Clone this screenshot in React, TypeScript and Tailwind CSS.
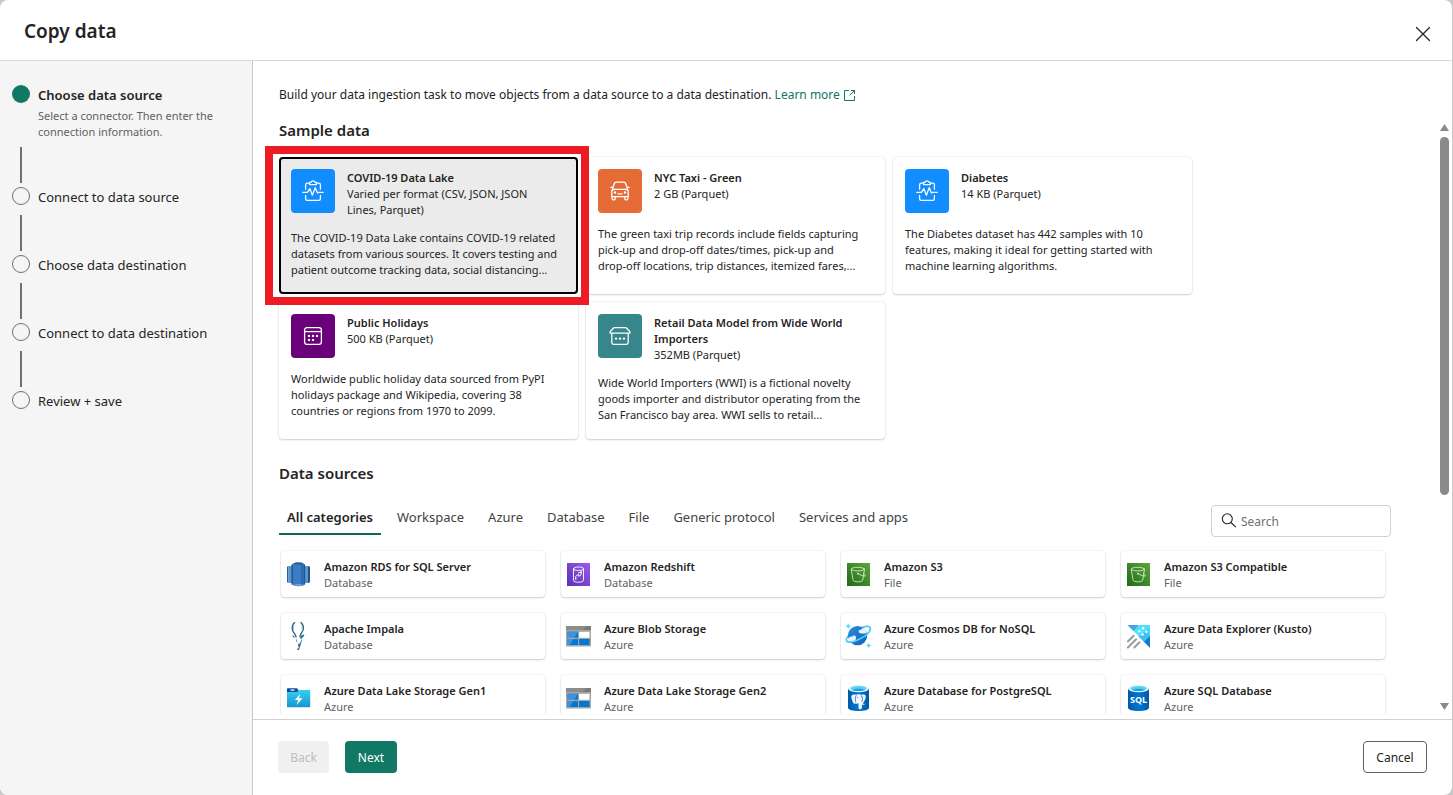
import React from 'react';

type IconProps = { className?: string };

function HealthIcon() {
  return (
    <svg width="22" height="22" viewBox="0 0 22 22" fill="none" stroke="#fff" strokeWidth="1.3" strokeLinejoin="round" strokeLinecap="round">
      <path d="M7.5 3.2H5.2a1.6 1.6 0 0 0-1.6 1.6v4.4M14.5 3.2h2.3a1.6 1.6 0 0 1 1.6 1.6v4.4M3.6 15.4v3.4a1.6 1.6 0 0 0 1.6 1.6h11.6a1.6 1.6 0 0 0 1.6-1.6v-3.4" />
      <path d="M7.6 4.6V2.9c0-.5.4-.8.9-.8h.7c.2-.8.9-1.3 1.8-1.3s1.6.5 1.8 1.3h.7c.5 0 .9.3.9.8v1.7z" />
      <path d="M.8 12.4h4.600l2.400-3.800 2.600 6.600 2.800-7.600 2.200 5.400 1-.6h4.800" />
    </svg>
  );
}

function TaxiIcon() {
  return (
    <svg width="20" height="20" viewBox="0 0 20 20" fill="none" stroke="#fff" strokeWidth="1.3" strokeLinejoin="round" strokeLinecap="round">
      <path d="M2.4 8.6 4 3.2C4.4 1.8 5.200 1.200 6.500 1.200h7c1.300 0 2.100.6 2.500 2l1.600 5.400" />
      <path d="M1.8 15.600v-4.800c0-1.400.8-2.400 2.200-2.400h12c1.400 0 2.200 1 2.200 2.400v4.800zM.8 6.400h2M17.200 6.400h2" />
      <path d="M2.200 15.800v2c0 .6.4 1 1 1h1c.6 0 1-.4 1-1v-2M14.800 15.800v2c0 .6.4 1 1 1h1c.6 0 1-.4 1-1v-2" />
      <path d="M8 12.900h4" />
      <circle cx="5" cy="11.500" r=".6" fill="#fff" stroke="#fff" />
      <circle cx="15" cy="11.500" r=".6" fill="#fff" stroke="#fff" />
    </svg>
  );
}

function HolidayIcon() {
  return (
    <svg width="20" height="20" viewBox="0 0 20 20" fill="none" stroke="#fff" strokeWidth="1.3">
      <rect x="1.600" y="1.600" width="16.800" height="16.800" rx="2.400" />
      <path d="M1.600 5.600h16.800" />
      <g fill="#fff" stroke="none">
        <circle cx="6" cy="9.900" r="1.200" />
        <circle cx="10" cy="9.900" r="1.200" />
        <circle cx="14" cy="9.900" r="1.200" />
        <circle cx="6" cy="13.900" r="1.200" />
        <circle cx="10" cy="13.900" r="1.200" />
      </g>
    </svg>
  );
}

function StoreIcon() {
  return (
    <svg width="22" height="20" viewBox="0 0 22 20" fill="none" stroke="#fff" strokeWidth="1.3" strokeLinejoin="round">
      <path d="M5.600 1.600h10.800c.6 0 1 .2 1.400.6l3 3.400c.6.700.2 1.600-.7 1.600H1.900c-.9 0-1.300-.9-.7-1.600l3-3.400c.4-.4.800-.6 1.400-.6z" />
      <path d="M2.800 7.200v9.400c0 1.100.7 1.800 1.800 1.800h12.800c1.100 0 1.800-.7 1.800-1.800V7.200" />
      <g fill="#fff" stroke="none">
        <circle cx="7" cy="12.600" r="1.200" />
        <circle cx="11" cy="12.600" r="1.200" />
        <circle cx="15" cy="12.600" r="1.200" />
      </g>
    </svg>
  );
}

function RdsIcon() {
  return (
    <svg width="26" height="26" viewBox="0.5 -0.5 26 26">
      <path d="M1.500 5.200 3 4.500v17l-1.500-.7z" fill="#2460a2" />
      <path d="M3 4.500h4v17H3z" fill="#5a95d0" />
      <path d="M19 4.500h3.500v17H19z" fill="#5a95d0" />
      <path d="M22.500 4.500l2 .8v15.400l-2 .8z" fill="#20558f" />
      <path d="M6 2.800h2.200v20.400H6zM17.600 2.800h2v20.400h-2z" fill="#20558f" />
      <path d="M7.600 2.400C8.600.6 17.200.6 18.200 2.400v21.200c-1 1.600-9.600 1.600-10.600 0z" fill="#3c7cc4" />
      <path d="M15.500 1.400c1.400.2 2.400.5 2.700 1v21.200c-.3.500-1.300.8-2.700 1z" fill="#2e69b0" />
      <path d="M7.600 2.400C8.600.6 17.200.6 18.200 2.400c-1.600.8-9 .8-10.600 0z" fill="#2b5f9e" />
      <path d="M7.600 23.200c1.600-1 9-1 10.600 0-1 1.900-9.600 1.900-10.600 0z" fill="#699fd4" />
    </svg>
  );
}

function RedshiftIcon() {
  return (
    <svg width="26" height="26" viewBox="0.5 -0.5 26 26">
      <defs>
        <linearGradient id="redshiftFill" x1="0" y1="1" x2="1" y2="0">
          <stop offset="0" stopColor="#5a30b5" />
          <stop offset="1" stopColor="#9a5ceb" />
        </linearGradient>
      </defs>
      <path d="M1.500 1.500h23v23h-23z" fill="url(#redshiftFill)" />
      <g fill="none" stroke="#fff" strokeWidth=".9" strokeLinecap="round">
        <path d="M8 7.400v11.400c0 1.300 2.200 1.900 5 1.900s5-.6 5-1.900V7.400M8 7.400c0-1.300 2.200-1.900 5-1.900s5 .6 5 1.900-2.200 1.500-5 1.500-5-.2-5-1.500z" />
        <path d="M10.200 17.200v-2.400l2.800-2 .2 2 2.400-1.400v-3l-2.600 1" />
      </g>
      <circle cx="10.200" cy="17.400" r=".8" fill="#fff" />
      <circle cx="15.600" cy="10.600" r=".8" fill="#fff" />
    </svg>
  );
}

function S3Icon() {
  return (
    <svg width="26" height="26" viewBox="0.5 -0.5 26 26">
      <defs>
        <linearGradient id="bucketFill" x1="0" y1="1" x2="1" y2="0">
          <stop offset="0" stopColor="#1f6b17" />
          <stop offset="1" stopColor="#5da53a" />
        </linearGradient>
      </defs>
      <path d="M1.500 1.500h23v23h-23z" fill="url(#bucketFill)" />
      <g fill="none" stroke="#e4f2dc" strokeWidth=".8" strokeLinecap="round" strokeLinejoin="round">
        <ellipse cx="12.400" cy="7.600" rx="6.600" ry="1.800" />
        <path d="M5.800 7.800 7.600 18.600c.3 1.200 2.300 1.700 4.800 1.700s4.500-.5 4.800-1.700L19 7.800" />
        <path d="M12.600 12.200c2.600 1.500 5.200 2.500 6.800 2.500 1.200 0 .5-1.300-1.200-2.500" />
      </g>
      <circle cx="12.400" cy="12.100" r=".9" fill="#e4f2dc" />
    </svg>
  );
}

function ImpalaIcon() {
  return (
    <svg width="26" height="30" viewBox="1 0 26 30">
      <g fill="none" strokeLinecap="round">
        <path d="M9.600 1.600C7.600 3.400 6.900 6 7.300 8.500c.4 2.300 1.800 3.400 2.900 5.200.5.900.7 1.600.9 2.300" stroke="#2a617f" strokeWidth="1.300" />
        <path d="M9 3.600C8.300 5.200 8.200 7 8.700 8.700" stroke="#7fa8bd" strokeWidth=".8" />
        <path d="M15.900 1.600c2.200 2 2.700 4 2.500 6.200-.2 2.500-1.900 3.800-2.800 5.600-.4.900-.6 1.600-.7 2.300" stroke="#2a617f" strokeWidth="1.300" />
        <path d="M17 4.600c.4 1.300.4 2.500.1 3.800" stroke="#7fa8bd" strokeWidth=".8" />
      </g>
      <g fill="#286c96">
        <path d="M15 17.300c.2-2.500 2.200-3.800 4.400-3.700-.2 1.700-1.600 3-3.600 4.300z" />
        <path d="M7.100 14.200c1.300.1 2.400 1 2.900 2.400-1.400-.2-2.500-.8-2.900-2.400z" />
        <path d="M17.200 16.800c-.4 3.900-1.900 8.900-3.200 12-.7.500-1.400.4-2-.2l1.800-2.300c-.7-1.300-.9-2.500-.7-3.800l1 .8c1.200-1.600 2-3.900 3.100-6.500z" />
        <path d="M11 17.600l1.600 3.900c-1.300-.8-2-2-1.600-3.900z" />
      </g>
    </svg>
  );
}

function StorageIcon() {
  return (
    <svg width="26" height="22" viewBox="0.5 -0.5 26 22">
      <path d="M.5.500h25v19.600c0 .6-.4.900-.9.900H1.400c-.5 0-.9-.3-.9-.9z" fill="#a5a5a5" />
      <path d="M.5 1.200c0-.4.300-.7.700-.7h23.600c.4 0 .7.300.7.700V4.500H.5z" fill="#7a7a7a" />
      <path d="M.5.500H21L17.500 4.500H.5z" fill="#8d8d8d" />
      <path d="M2 6.300h10.500v6H2zM2 13.600h10.500v6H2zM13.600 13.600H24v6H13.600z" fill="#0078d4" />
      <path d="M2 6.300h10.500L4.200 19.600H2z" fill="#3d93dc" />
      <path d="M2 12.300h10.500v1.300H2z" fill="#a5a5a5" />
      <path d="M13.600 6.300H24v6H13.600z" fill="#fff" />
    </svg>
  );
}

function CosmosIcon() {
  return (
    <svg width="28" height="28" viewBox="1 0 28 28">
      <defs>
        <linearGradient id="planetFill" x1="0" y1="0" x2="1" y2="1">
          <stop offset="0" stopColor="#2b8ce0" />
          <stop offset="1" stopColor="#1462b8" />
        </linearGradient>
      </defs>
      <path d="M17.600 5.600c5.300-1.800 8.300-1.600 8.700.5.700 3.500-5.300 8-11 10.900-6.300 3.200-12.300 4.300-13 1.300-.3-1.500.7-3.200 2.800-5.200" fill="none" stroke="#50c8f4" strokeWidth="1.700" />
      <circle cx="13.600" cy="13.600" r="9.600" fill="url(#planetFill)" />
      <path d="M4.500 16.600c.8-1.900 2.400-2.600 3.900-2 .6-1.500 2.800-1.500 3.400 0 .9 2.400-.5 4.400-3.200 4.600-1.700.1-3 .1-3.300-.2-.4-.7-.7-1.500-.8-2.400zM15 10.600c-.9-1.500.3-3 1.900-2.700.7-2.200 3.500-2.200 4.300-.6.600 1.100 1.200 2.300 1.600 3.700-1.800.7-6.500 1.200-7.800-.4z" fill="#e8f3fc" />
      <path d="M26.300 6.300c.7 3.500-5.300 8-11 10.900-4.600 2.300-9.300 3.600-11.700 2.900" fill="none" stroke="#50d8ff" strokeWidth="1.500" />
      <path d="M4.200.9c.4 2 1 2.700 3.300 3.200-2.300.5-2.900 1.200-3.300 3.300C3.800 5.300 3.200 4.600 1 4.100 3.200 3.600 3.800 2.900 4.200.9zM24.700 20.600c.4 2 1 2.500 2.900 2.900-1.900.4-2.500 1-2.900 2.900-.4-1.900-1-2.500-2.900-2.900 1.900-.4 2.500-.9 2.900-2.900z" fill="#50d8f8" />
    </svg>
  );
}

function KustoIcon() {
  return (
    <svg width="26" height="26" viewBox="0.5 -0.5 26 26">
      <path d="M2 1.500h22.500L13.500 13z" fill="#50e0fb" />
      <path d="M2 1.500h11L8 7.600z" fill="#4aa0ea" />
      <path d="M24.500 1.500v22.800L13 13z" fill="#45d5f8" />
      <path d="M24.500 12.500v11.800l-6-6z" fill="#1678cf" />
      <path d="M13 13l5.600 5.400 5.900-5.900-4-4z" fill="#3a9ce8" opacity=".4" />
      <g stroke="#9b9b9b" strokeWidth="2" strokeLinecap="round">
        <path d="M2.400 18 8.200 12.200M2.400 24 10.600 15.800M8.800 24l5.200-5.200" />
      </g>
      <g fill="#e9fbff">
        <circle cx="17.600" cy="4.800" r="1.200" />
        <circle cx="13.800" cy="7.800" r="1.200" />
        <circle cx="20.800" cy="8.200" r="1.300" />
        <circle cx="17" cy="11" r="1.300" />
      </g>
    </svg>
  );
}

function LakeFolderIcon() {
  return (
    <svg width="26" height="22" viewBox="0.5 -0.5 26 22">
      <defs>
        <linearGradient id="folderFill" x1="0" y1="0" x2="0" y2="1">
          <stop offset="0" stopColor="#34d0f2" />
          <stop offset="1" stopColor="#1795d0" />
        </linearGradient>
      </defs>
      <path d="M1.500 1.500c0-.5.300-.8.800-.8h9.200l1.500 2v4H1.500z" fill="#0a4f9c" />
      <path d="M5 2h4v1.200H5z" fill="#fff" />
      <path d="M1.500 4.600h9.800l2.700-2h10.700v16.300c0 .5-.4.900-.9.900H2.400c-.5 0-.9-.4-.9-.9z" fill="url(#folderFill)" />
      <path d="M14.600 6.400 9.400 12.600h3.300l-1.600 4.800 6-6.600h-3.500z" fill="#fff" />
    </svg>
  );
}

function Cylinder({ id, children }: { id: string; children: React.ReactNode }) {
  return (
    <svg width="24" height="28" viewBox="0.5 0 24 28">
      <defs>
        <linearGradient id={id} x1="0" y1="0" x2="1" y2="0">
          <stop offset="0" stopColor="#0059a8" />
          <stop offset=".5" stopColor="#0078d4" />
          <stop offset="1" stopColor="#0059a8" />
        </linearGradient>
      </defs>
      <path d="M1.500 4.500v19.200C1.500 25.700 6.200 27 12 27s10.500-1.300 10.500-3.300V4.500z" fill={`url(#${id})`} />
      <ellipse cx="12" cy="4.600" rx="10.500" ry="3.700" fill="#e6f2f8" />
      <ellipse cx="12" cy="4.500" rx="8" ry="2.500" fill="#50d5f5" />
      <path d="M5.800 6c1.400-.7 3.600-1.200 6.200-1.200s4.800.5 6.200 1.200C16.700 6.700 14.500 7 12 7s-4.700-.3-6.200-1z" fill="#1d9ed6" />
      {children}
    </svg>
  );
}

function PostgresIcon() {
  return (
    <Cylinder id="pgFill">
      <path d="M5.200 11.600c1.200-1.500 3.300-1.300 4.800-.8 1.700-.7 3.500-.6 4.900 0 1.700-.5 3.900-.3 4.300 1.300.5 2-1.300 5.400-3 7.400 1 .5 1.900.4 2.600.3-.7 1-2.100 1.300-3.200.9l-.3 3.300c-.2 1.700-3.100 1.700-3.200-.1l-.2-4.600c-.9.300-1.800.6-2.900.1-1.600.8-2.300-.4-3-2.200-.7-2-1.700-4.400-.8-5.600z" fill="#f3f8fc" />
      <path d="M9.700 11.300c-1.300 2.300-.9 4.600-.5 7M14.800 11.300c1.700 2 1.500 4.400.4 6.600" fill="none" stroke="#1173c4" strokeWidth=".8" />
      <circle cx="10.900" cy="13.200" r=".5" fill="#1173c4" />
      <circle cx="14.600" cy="13" r=".5" fill="#1173c4" />
    </Cylinder>
  );
}

function SqlIcon() {
  return (
    <Cylinder id="sqlFill">
      <text x="12" y="19" textAnchor="middle" fontSize="9" fontWeight="700" fill="#fff" fontFamily="Noto Sans, sans-serif">
        SQL
      </text>
    </Cylinder>
  );
}

function CloseIcon() {
  return (
    <svg width="16" height="16" viewBox="0 0 16 16" fill="none" stroke="#242424" strokeWidth="1.300" strokeLinecap="round">
      <path d="M1.500 1.500l13 13M14.500 1.500l-13 13" />
    </svg>
  );
}

function OpenIcon({ className }: IconProps) {
  return (
    <svg className={className} width="13" height="13" viewBox="0 0 13 13" fill="none" stroke="#117865" strokeWidth="1">
      <path d="M6 1.500H1.500v10h10V7M8 1.500h3.500V5M11.500 1.500l-5 5" />
    </svg>
  );
}

function SearchIcon() {
  return (
    <svg width="16" height="16" viewBox="0 0 16 16" fill="none" stroke="#242424" strokeWidth="1.100" strokeLinecap="round">
      <circle cx="6.300" cy="5.800" r="5" />
      <path d="M10 9.500l4.600 4.300" />
    </svg>
  );
}

const steps = [
  { title: 'Choose data source', note: 'Select a connector. Then enter the connection information.' },
  { title: 'Connect to data source' },
  { title: 'Choose data destination' },
  { title: 'Connect to data destination' },
  { title: 'Review + save' },
];

// A word joiner after the hyphen keeps "drop-off" on one line.
const samples = [
  {
    title: 'COVID-19 Data Lake',
    size: 'Varied per format (CSV, JSON, JSON Lines, Parquet)',
    text: 'The COVID-19 Data Lake contains COVID-19 related datasets from various sources. It covers testing and patient outcome tracking data, social distancing...',
    tile: 'bg-[#118dff]',
    icon: HealthIcon,
    selected: true,
  },
  {
    title: 'NYC Taxi - Green',
    size: '2 GB (Parquet)',
    text: 'The green taxi trip records include fields capturing pick-up and drop-off dates/times, pick-up and drop-\u2060off locations, trip distances, itemized fares,...',
    tile: 'bg-[#e66c37]',
    icon: TaxiIcon,
  },
  {
    title: 'Diabetes',
    size: '14 KB (Parquet)',
    text: 'The Diabetes dataset has 442 samples with 10 features, making it ideal for getting started with machine learning algorithms.',
    tile: 'bg-[#118dff]',
    icon: HealthIcon,
  },
  {
    title: 'Public Holidays',
    size: '500 KB (Parquet)',
    text: 'Worldwide public holiday data sourced from PyPI holidays package and Wikipedia, covering 38 countries or regions from 1970 to 2099.',
    tile: 'bg-[#6b007b]',
    icon: HolidayIcon,
  },
  {
    title: 'Retail Data Model from Wide World Importers',
    size: '352MB (Parquet)',
    text: 'Wide World Importers (WWI) is a fictional novelty goods importer and distributor operating from the San Francisco bay area. WWI sells to retail...',
    tile: 'bg-[#37868b]',
    icon: StoreIcon,
  },
];

const categories = ['All categories', 'Workspace', 'Azure', 'Database', 'File', 'Generic protocol', 'Services and apps'];

const sources = [
  { name: 'Amazon RDS for SQL Server', kind: 'Database', icon: RdsIcon },
  { name: 'Amazon Redshift', kind: 'Database', icon: RedshiftIcon },
  { name: 'Amazon S3', kind: 'File', icon: S3Icon },
  { name: 'Amazon S3 Compatible', kind: 'File', icon: S3Icon },
  { name: 'Apache Impala', kind: 'Database', icon: ImpalaIcon },
  { name: 'Azure Blob Storage', kind: 'Azure', icon: StorageIcon },
  { name: 'Azure Cosmos DB for NoSQL', kind: 'Azure', icon: CosmosIcon },
  { name: 'Azure Data Explorer (Kusto)', kind: 'Azure', icon: KustoIcon },
  { name: 'Azure Data Lake Storage Gen1', kind: 'Azure', icon: LakeFolderIcon },
  { name: 'Azure Data Lake Storage Gen2', kind: 'Azure', icon: StorageIcon },
  { name: 'Azure Database for PostgreSQL', kind: 'Azure', icon: PostgresIcon },
  { name: 'Azure SQL Database', kind: 'Azure', icon: SqlIcon },
];

const cardShadow = 'shadow-[0_0_2px_rgba(0,0,0,0.12),0_1px_2px_rgba(0,0,0,0.16)]';

function Steps() {
  return (
    <nav aria-label="Steps" className="w-[253px] shrink-0 border-r border-[#c8c8c8] bg-[#f5f5f5] px-3 pt-6">
      <ol>
        {steps.map((step, i) => (
          <li key={step.title} className="flex gap-2">
            <div className="flex w-[18px] flex-col items-center">
              <span
                className={
                  i === 0
                    ? 'size-[18px] shrink-0 rounded-full bg-[#117865]'
                    : 'size-[18px] shrink-0 rounded-full border border-[#707070]'
                }
              />
              {i < steps.length - 1 && <span className="mt-auto mb-1 h-9 w-0.5 bg-[#707070]" />}
            </div>
            <div className={i === 0 ? 'h-[102px] flex-1' : 'h-[68px] flex-1'}>
              <div className={i === 0 ? 'text-[13px] leading-5 font-semibold' : 'text-[13px] leading-5'}>{step.title}</div>
              {step.note && <p className="mt-[3px] text-[11px] leading-4 text-[#616161]">{step.note}</p>}
            </div>
          </li>
        ))}
      </ol>
    </nav>
  );
}

function SampleCards() {
  return (
    <div className="mt-[17px] grid grid-cols-[repeat(auto-fill,299px)] gap-2">
      {samples.map((s) => {
        const Icon = s.icon;
        return (
          <div key={s.title} className={s.selected ? 'relative z-10' : 'relative'}>
            <button
              type="button"
              className={`flex h-[137px] w-full flex-col gap-3 rounded py-3 pr-5 pl-3 text-left ${
                s.selected ? 'bg-[#ebebeb] outline-2 -outline-offset-2 outline-black' : `bg-white ${cardShadow}`
              }`}
            >
              <span className="flex gap-3">
                <span className={`flex size-11 shrink-0 items-center justify-center rounded ${s.tile}`}>
                  <Icon />
                </span>
                <span className="-mb-px flex flex-col pt-px text-[11px] leading-4">
                  <span className="font-semibold">{s.title}</span>
                  <span>{s.size}</span>
                </span>
              </span>
              <span className="pt-px text-[11px] leading-4">{s.text}</span>
            </button>
            {s.selected && <div className="pointer-events-none absolute -top-[11px] -right-[11px] -bottom-[11px] -left-[14px] border-8 border-[#ed1c24]" />}
          </div>
        );
      })}
    </div>
  );
}

function SourceCards() {
  return (
    <div className="mt-3.5 grid grid-cols-[repeat(auto-fill,264px)] gap-4 pl-0.5">
      {sources.map((s) => {
        const Icon = s.icon;
        return (
          <button key={s.name} type="button" className={`flex h-[46px] items-center gap-[7px] rounded bg-white pr-2 text-left ${cardShadow}`}>
            <span className="flex w-9 shrink-0 items-center justify-center">
              <Icon />
            </span>
            <span className="flex flex-col pt-0.5 text-[11px] leading-4">
              <span className="font-semibold">{s.name}</span>
              <span className="text-[#616161]">{s.kind}</span>
            </span>
          </button>
        );
      })}
    </div>
  );
}

function Scrollbar() {
  return (
    <div aria-hidden="true" className="mr-[3px] flex w-[9px] shrink-0 flex-col items-center pt-[5px] pb-1">
      <svg width="9" height="7" viewBox="0 0 9 7">
        <path d="M4.500 0 9 7H0z" fill="#8a8a8a" />
      </svg>
      <div className="my-1.5 w-full flex-1">
        <div className="h-[64%] w-full rounded-full bg-[#8a8a8a]" />
      </div>
      <svg width="9" height="7" viewBox="0 0 9 7">
        <path d="M4.500 7 0 0h9z" fill="#8a8a8a" />
      </svg>
    </div>
  );
}

export default function App() {
  return (
    <div className="h-screen bg-[#c8c8c8] pr-px font-['Noto_Sans',sans-serif] text-[#242424]">
      <div role="dialog" aria-labelledby="title" className="flex h-full flex-col overflow-hidden rounded-lg bg-white">
        <header className="flex h-[61px] shrink-0 items-center justify-between border-b border-[#d6d6d6] pr-5 pl-6">
          <h1 id="title" className="pt-px text-[19px] leading-7 font-semibold">
            Copy data
          </h1>
          <button type="button" aria-label="Close" className="mt-2 flex size-[18px] items-center justify-center">
            <CloseIcon />
          </button>
        </header>
        <div className="flex min-h-0 flex-1">
          <Steps />
          <div className="flex min-w-0 flex-1 flex-col">
            <p className="pt-6 pl-[26px] text-[12px] leading-5">
              Build your data ingestion task to move objects from a data source to a data destination.{' '}
              <a href="#learn" className="text-[#117865]">
                Learn more <OpenIcon className="inline" />
              </a>
            </p>
            <div className="mt-3.5 mb-[5px] flex min-h-0 flex-1">
              <main className="min-w-0 flex-1 overflow-y-auto pr-[49px] pl-[26px] [scrollbar-width:none]">
                <h2 className="mt-px text-[15px] leading-5 font-semibold">Sample data</h2>
                <SampleCards />
                <h2 className="mt-6 text-[15px] leading-5 font-semibold">Data sources</h2>
                <div className="mt-4 flex items-start justify-between">
                  <div role="tablist" className="flex gap-2">
                    {categories.map((c, i) => (
                      <button
                        key={c}
                        type="button"
                        role="tab"
                        aria-selected={i === 0}
                        className={
                          i === 0
                            ? 'h-9 border-b-2 border-[#0c695a] px-2 pt-0.5 text-[13px] leading-5 font-semibold'
                            : 'h-9 border-b-2 border-transparent px-2 pt-0.5 text-[13px] leading-5 text-[#424242]'
                        }
                      >
                        {c}
                      </button>
                    ))}
                  </div>
                  <label className="mt-1.5 flex h-8 w-[180px] items-center gap-1 rounded border border-[#d1d1d1] px-[9px]">
                    <SearchIcon />
                    <input type="search" aria-label="Search" placeholder="Search" className="min-w-0 flex-1 pt-0.5 text-[12px] outline-none placeholder:text-[#707070]" />
                  </label>
                </div>
                <SourceCards />
              </main>
              <Scrollbar />
            </div>
            <footer className="flex h-[76px] shrink-0 items-center border-t border-[#d1d1d1] px-[25px] pb-0.5 text-[12px]">
              <button type="button" disabled className="h-8 w-[51px] rounded bg-[#f0f0f0] pt-0.5 text-[#bdbdbd]">
                Back
              </button>
              <button type="button" className="ml-4 h-8 w-[52px] rounded bg-[#117865] pt-0.5 text-white">
                Next
              </button>
              <button type="button" className="ml-auto h-8 w-16 rounded border border-[#616161] bg-white pt-0.5">
                Cancel
              </button>
            </footer>
          </div>
        </div>
      </div>
    </div>
  );
}
